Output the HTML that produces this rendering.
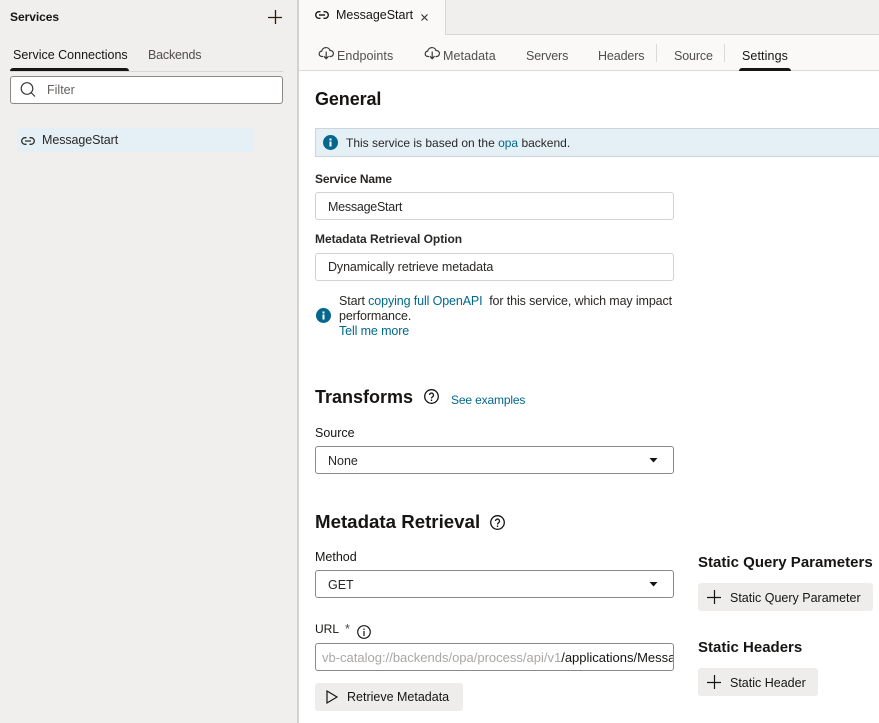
<!DOCTYPE html>
<html><head><meta charset="utf-8"><style>
*{box-sizing:border-box}
html,body{margin:0;padding:0}
body{width:879px;height:723px;overflow:hidden;background:#fff;position:relative;font-family:"Liberation Sans",sans-serif;color:#161513;font-size:12.5px}
.a{position:absolute;white-space:nowrap}
.box{position:absolute;background:#fff;border:1px solid #d3d2d0;border-radius:3px}
.sel{border-color:#8b8986}
.l{color:#00688c}
.h{font-weight:bold;font-size:18px}
.lab{font-size:12.5px;color:#2a2826}
.sub{font-weight:bold;font-size:15px}
.btn{position:absolute;background:#eeedeb;border-radius:3px}
.tab{color:#514e4b;font-size:12.5px}
svg{position:absolute;overflow:visible}
</style></head><body>
<div class="a" style="left:0;top:0;width:299px;height:723px;background:#f1efed;border-right:2px solid #d4d2d0"></div>
<div class="a" style="left:10px;top:10px;font-weight:bold;font-size:12px;letter-spacing:-.05px">Services</div>
<svg style="left:268px;top:10px" width="14" height="14" fill="none" stroke="#2a1c10" stroke-width="1.3"><path d="M7.500 0V14M0 7.500H14"/></svg>
<div class="a" style="left:13px;top:47.500px;font-size:12.500px;color:#161513">Service Connections</div>
<div class="a tab" style="left:148px;top:47.500px;letter-spacing:-.2px">Backends</div>
<div class="a" style="left:10px;top:71px;width:273px;height:1px;background:#d9d7d5"></div>
<div class="a" style="left:10px;top:68px;width:119px;height:3px;background:#161513;border-radius:3px 3px 0 0"></div>
<div class="box sel" style="left:10px;top:76px;width:273px;height:28px"></div>
<svg style="left:20px;top:82px" width="16" height="16" fill="none" stroke="#3c3a38" stroke-width="1.200"><circle cx="7" cy="6.500" r="5.800"/><path d="M11 10.500L15 14.500"/></svg>
<div class="a" style="left:47px;top:83px;color:#65625f">Filter</div>
<div class="a" style="left:17px;top:128px;width:237px;height:24px;background:#e4eff6"></div>
<svg style="left:21px;top:136.500px" width="14" height="8" fill="none" stroke="#2e2c2a" stroke-width="1.300"><path d="M5.500 .7H4a3.300 3.300 0 0 0 0 6.600H5.500M8.500 .7H10a3.300 3.300 0 0 1 0 6.600H8.500M4 4H10"/></svg>
<div class="a" style="left:42px;top:133px;color:#2a2826;letter-spacing:-.08px">MessageStart</div>

<div class="a" style="left:299px;top:0;width:580px;height:71px;background:#faf9f8;border-bottom:1px solid #dcdad8"></div>
<div class="a" style="left:445px;top:0;width:434px;height:35px;background:#f1efed;border-left:1px solid #d9d7d5;border-bottom:1px solid #d9d7d5"></div>
<svg style="left:315px;top:11px" width="14" height="8" fill="none" stroke="#1f1d1b" stroke-width="1.400"><path d="M5.500 .7H4a3.300 3.300 0 0 0 0 6.600H5.500M8.500 .7H10a3.300 3.300 0 0 1 0 6.600H8.500M4 4H10"/></svg>
<div class="a" style="left:336px;top:8px;font-size:12.500px">MessageStart</div>
<svg style="left:421px;top:13.500px" width="7" height="7" fill="none" stroke="#33312f" stroke-width="1.100"><path d="M.5 .5L6.500 6.500M6.500 .5L.5 6.500"/></svg>
<svg style="left:319px;top:46px" width="15" height="14" fill="none" stroke="#3c3a38" stroke-width="1.200"><path d="M4 10.500H3a2.700 2.700 0 0 1-.3-5.400A4.300 4.300 0 0 1 11 4.500a3 3 0 0 1 .8 6H10.500M7.200 5.500V12.500M4.800 10.200L7.200 12.700L9.600 10.200"/></svg>
<div class="a tab" style="left:337px;top:49px;letter-spacing:.08px">Endpoints</div>
<svg style="left:425px;top:46px" width="15" height="14" fill="none" stroke="#3c3a38" stroke-width="1.200"><path d="M4 10.500H3a2.700 2.700 0 0 1-.3-5.400A4.300 4.300 0 0 1 11 4.500a3 3 0 0 1 .8 6H10.500M7.200 5.500V12.500M4.800 10.200L7.200 12.700L9.600 10.200"/></svg>
<div class="a tab" style="left:443px;top:49px;letter-spacing:.08px">Metadata</div>
<div class="a tab" style="left:526px;top:49px;letter-spacing:-.12px">Servers</div>
<div class="a tab" style="left:598px;top:49px;letter-spacing:-.12px">Headers</div>
<div class="a" style="left:656px;top:44px;width:1px;height:18px;background:#dcdad8"></div>
<div class="a tab" style="left:674px;top:49px;letter-spacing:-.12px">Source</div>
<div class="a" style="left:724px;top:44px;width:1px;height:18px;background:#dcdad8"></div>
<div class="a" style="left:742px;top:49px;font-size:12.500px;letter-spacing:.1px">Settings</div>
<div class="a" style="left:739px;top:68px;width:52px;height:3px;background:#161513;border-radius:3px 3px 0 0"></div>

<div class="a h" style="left:315px;top:89px;letter-spacing:-.1px">General</div>
<div class="a" style="left:315px;top:128px;width:564px;height:29px;background:#e4eff6;border:1px solid #c9d6de;border-right:0"></div>
<svg style="left:323px;top:135px" width="15" height="15"><circle cx="7.500" cy="7.500" r="7.500" fill="#04688e"/><rect x="6.500" y="6.500" width="2" height="5" fill="#fff"/><rect x="6.500" y="3.500" width="2" height="2" fill="#fff"/></svg>
<div class="a" style="left:346px;top:136px;color:#2a2826;font-size:12px">This service is based on the <span class="l">opa</span> backend.</div>

<div class="a lab" style="left:315px;top:172px;font-weight:bold;font-size:12px;letter-spacing:-.15px">Service Name</div>
<div class="box" style="left:315px;top:192px;width:359px;height:28px"></div>
<div class="a" style="left:328px;top:200px;color:#2a2826;letter-spacing:-.25px">MessageStart</div>
<div class="a lab" style="left:315px;top:232px;font-weight:bold;font-size:12px;letter-spacing:-.04px">Metadata Retrieval Option</div>
<div class="box" style="left:315px;top:253px;width:359px;height:28px"></div>
<div class="a" style="left:328px;top:260px;color:#2a2826;letter-spacing:-.1px">Dynamically retrieve metadata</div>

<svg style="left:316px;top:308px" width="15" height="15"><circle cx="7.500" cy="7.500" r="7.500" fill="#04688e"/><rect x="6.500" y="6.500" width="2" height="5" fill="#fff"/><rect x="6.500" y="3.500" width="2" height="2" fill="#fff"/></svg>
<div class="a" style="left:339px;top:294px;color:#2a2826;letter-spacing:-.12px">Start <span class="l">copying full OpenAPI</span>&nbsp; for this service, which may impact</div>
<div class="a" style="left:339px;top:309px;color:#2a2826;letter-spacing:-.12px">performance.</div>
<div class="a l" style="left:339px;top:324px;letter-spacing:-.12px">Tell me more</div>

<div class="a h" style="left:315px;top:387px">Transforms</div>
<svg style="left:424px;top:389px" width="15" height="15" fill="none" stroke="#161513" stroke-width="1.300"><circle cx="7.500" cy="7.500" r="6.800"/><path d="M5.500 6a2 2 0 1 1 3 1.800C7.700 8.300 7.500 8.700 7.500 9.500M7.500 10.500V12"/></svg>
<div class="a l" style="left:451px;top:393px;font-size:12px;letter-spacing:-.15px">See examples</div>
<div class="a lab" style="left:315px;top:426px;color:#161513">Source</div>
<div class="box sel" style="left:315px;top:446px;width:359px;height:28px"></div>
<div class="a" style="left:328px;top:454px;color:#2a2826">None</div>
<svg style="left:649px;top:458px" width="9" height="5"><path d="M.5 0H8.500L4.500 4.500Z" fill="#161513"/></svg>

<div class="a h" style="left:315px;top:511px;font-size:18.700px">Metadata Retrieval</div>
<svg style="left:490px;top:515px" width="15" height="15" fill="none" stroke="#161513" stroke-width="1.300"><circle cx="7.500" cy="7.500" r="6.800"/><path d="M5.500 6a2 2 0 1 1 3 1.800C7.700 8.300 7.500 8.700 7.500 9.500M7.500 10.500V12"/></svg>
<div class="a lab" style="left:315px;top:550px;color:#161513">Method</div>
<div class="box sel" style="left:315px;top:570px;width:359px;height:28px"></div>
<div class="a" style="left:328px;top:578px;color:#2a2826">GET</div>
<svg style="left:649px;top:582px" width="9" height="5"><path d="M.5 0H8.500L4.500 4.500Z" fill="#161513"/></svg>

<div class="a lab" style="left:315px;top:622px;color:#161513;font-size:12px">URL</div>
<div class="a" style="left:345px;top:622px;color:#4a4846">*</div>
<svg style="left:357px;top:625px" width="14" height="14" fill="none" stroke="#161513" stroke-width="1.200"><circle cx="7" cy="7" r="6.300"/><path d="M7 6V11M7 3.500V5"/></svg>
<div class="box sel" style="left:315px;top:643px;width:359px;height:28px;overflow:hidden"><div class="a" style="left:6px;top:6px;color:#a9a7a5;font-size:13px">vb-catalog://backends/opa/process/api/v1<span style="color:#161513">/applications/MessageStart</span></div></div>
<div class="btn" style="left:315px;top:683px;width:148px;height:28px"></div>
<svg style="left:326px;top:690px" width="12" height="14" fill="none" stroke="#161513" stroke-width="1.200"><path d="M1 1L11 7L1 13Z"/></svg>
<div class="a" style="left:347px;top:690px;color:#161513">Retrieve Metadata</div>

<div class="a sub" style="left:698px;top:554px;letter-spacing:.02px">Static Query Parameters</div>
<div class="btn" style="left:698px;top:583px;width:175px;height:28px"></div>
<svg style="left:707px;top:590px" width="14" height="14" fill="none" stroke="#161513" stroke-width="1.200"><path d="M7.500 0V14M0 7.500H14"/></svg>
<div class="a" style="left:730px;top:591px;color:#161513">Static Query Parameter</div>
<div class="a sub" style="left:698px;top:639px">Static Headers</div>
<div class="btn" style="left:698px;top:668px;width:120px;height:28px"></div>
<svg style="left:707px;top:675px" width="14" height="14" fill="none" stroke="#161513" stroke-width="1.200"><path d="M7.500 0V14M0 7.500H14"/></svg>
<div class="a" style="left:730px;top:676px;color:#161513">Static Header</div>
</body></html>
